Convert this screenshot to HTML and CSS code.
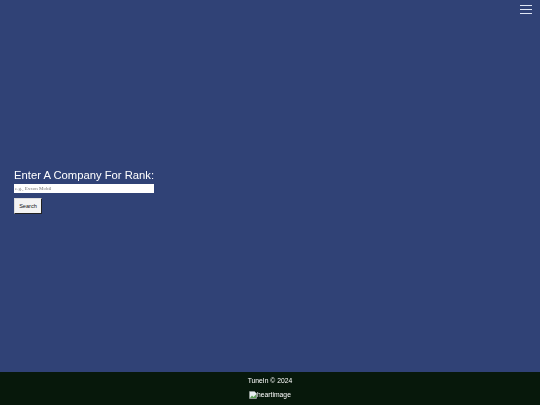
FILE: index.html
```html
<!DOCTYPE html>
<html lang="en">
<head>
<meta charset="utf-8">
<title>TuneIn</title>
<link rel="stylesheet" href="styles.css">
</head>
<body>
<div class="page">
  <main class="main">
    <button class="menu" type="button" aria-label="Menu"><span></span><span></span><span></span></button>
    <form class="search">
      <label class="search-label" for="company">Enter A Company For Rank:</label>
      <input class="search-input" id="company" type="text" placeholder="e.g., Exxon Mobil">
      <button class="search-button" type="button">Search</button>
    </form>
  </main>
  <footer class="footer">
    <p class="copy">TuneIn © 2024</p>
    <p class="heart"><svg class="broken" viewBox="0 0 8 8" width="8" height="8" aria-hidden="true"><path d="M0.5 0.5H5.5L7.5 2.5V7.5H0.5Z" fill="#e8eef0" stroke="#9aa3a0" stroke-width="0.6"/><path d="M1 7L3 4.5L4.5 6L7 3.5V7Z" fill="#5c9e55"/></svg><span>heartimage</span></p>
  </footer>
</div>
</body>
</html>
```

FILE: styles.css
```css
html, body {
  margin: 0;
  padding: 0;
  height: 100%;
}
body {
  font-family: "Liberation Sans", Arial, sans-serif;
  color: #fff;
}
.page {
  display: flex;
  flex-direction: column;
  height: 405px;
  overflow: hidden;
}
.main {
  position: relative;
  flex: 1;
  display: flex;
  flex-direction: column;
  justify-content: center;
  padding-left: 14px;
  background: #304276;
}
.menu {
  position: absolute;
  top: 5px;
  right: 8px;
  display: flex;
  flex-direction: column;
  gap: 3px;
  width: 12px;
  padding: 0;
  border: 0;
  background: none;
}
.menu span {
  display: block;
  height: 1px;
  background: #dfe6f5;
}
.search {
  display: flex;
  flex-direction: column;
  align-items: flex-start;
  width: 140px;
  margin-top: 10px;
  will-change: opacity;
}
.search-label {
  font-size: 11.25px;
  line-height: 12px;
  padding-bottom: 3px;
  white-space: nowrap;
}
.search-input {
  box-sizing: border-box;
  width: 140px;
  height: 9px;
  margin: 0;
  padding: 0 1px;
  border: 0;
  background: #fff;
  font-family: "Liberation Serif", serif;
  font-size: 5px;
}
.search-input::placeholder {
  color: #777;
}
.search-button {
  box-sizing: border-box;
  width: 28px;
  height: 16px;
  margin-top: 5px;
  padding: 0;
  border: 1px solid;
  border-color: #ddd #222 #222 #ddd;
  background: #f3f3f3;
  color: #111;
  font-family: "Liberation Sans", Arial, sans-serif;
  font-size: 5.6px;
}
.footer {
  display: flex;
  flex-direction: column;
  align-items: center;
  height: 33px;
  background: #07180b;
  font-size: 6.75px;
}
.copy {
  margin: 4px 0 0;
  line-height: 9px;
  will-change: opacity;
}
.heart {
  display: flex;
  align-items: center;
  margin: 5px 0 0;
  line-height: 9px;
  will-change: opacity;
}
```
